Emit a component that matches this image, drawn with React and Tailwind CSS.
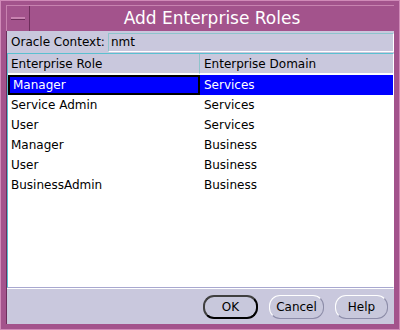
import React from 'react';

const rows = [
  { role: 'Manager', domain: 'Services', selected: true },
  { role: 'Service Admin', domain: 'Services' },
  { role: 'User', domain: 'Services' },
  { role: 'Manager', domain: 'Business' },
  { role: 'User', domain: 'Business' },
  { role: 'BusinessAdmin', domain: 'Business' },
];

function Button({ children, isDefault, className }) {
  return (
    <button
      className={
        'h-[24px] rounded-[11px] bg-[#c8c8dc] text-[12px] text-black ' +
        (isDefault
          ? 'border-2 border-black border-t-[#404040] border-l-[#404040] '
          : 'border border-[#8c8ca8] border-t-white border-l-white ') +
        className
      }
    >
      {children}
    </button>
  );
}

export default function App() {
  return (
    <div className="w-[400px] h-[330px] bg-[#a3538c] border border-[#d08ab8] p-[5px] pt-[4px] flex flex-col font-['DejaVu_Sans',sans-serif]">
      {/* title bar */}
      <div className="h-[26px] flex border-t border-l border-[#c882b0] shrink-0">
        <div className="w-[23px] border-r border-[#6e2e5c] flex items-center justify-center">
          <div className="w-[14px] h-[3px] bg-[#c882b0] border-b border-[#6e2e5c]" />
        </div>
        <div className="flex-1 flex items-center justify-center text-white text-[17px] leading-none pb-[1px]">
          Add Enterprise Roles
        </div>
      </div>

      {/* content */}
      <div className="flex-1 bg-[#c9c8dd] flex flex-col border-l border-[#6e2e5c]">
        <div className="h-[20px] flex items-center pl-[4px] mt-[1px] text-[12px] shrink-0">
          <span className="w-[97px] shrink-0 text-black">Oracle Context:</span>
          <div className="flex-1 h-[19px] bg-[#c9c8dd] border border-[#8ec4cc] border-b-white border-r-white flex items-center pl-[2px] text-black">
            nmt
          </div>
        </div>

        <div className="mt-[1px] flex-1 flex flex-col border border-[#5ac0d0] border-r-white border-b-[#a8a8d0] bg-white">
          <div className="h-[20px] flex text-[12px] text-black bg-[#c9c8dd] shrink-0">
            <div className="w-[192px] flex items-center pl-[3px] border-r border-[#8ec4cc] border-b border-b-white">
              Enterprise Role
            </div>
            <div className="flex-1 flex items-center pl-[4px] border-b border-white">
              Enterprise Domain
            </div>
          </div>
          <div className="flex flex-col pt-[1px]">
            {rows.map((r, i) => (
              <div
                key={i}
                className={
                  'h-[20px] flex text-[12px] ' +
                  (r.selected ? 'bg-[#0000ff] text-white' : 'text-black')
                }
              >
                <div
                  className={
                    'w-[192px] flex items-center pl-[3px] ' +
                    (r.selected ? 'border-2 border-black' : '')
                  }
                >
                  {r.role}
                </div>
                <div className="flex-1 flex items-center pl-[4px]">{r.domain}</div>
              </div>
            ))}
          </div>
        </div>

        <div className="h-[36px] flex items-center justify-end gap-[11px] pr-[6px] border-t border-white shrink-0">
          <Button isDefault className="w-[55px]">OK</Button>
          <Button className="w-[55px]">Cancel</Button>
          <Button className="w-[53px]">Help</Button>
        </div>
      </div>
    </div>
  );
}
